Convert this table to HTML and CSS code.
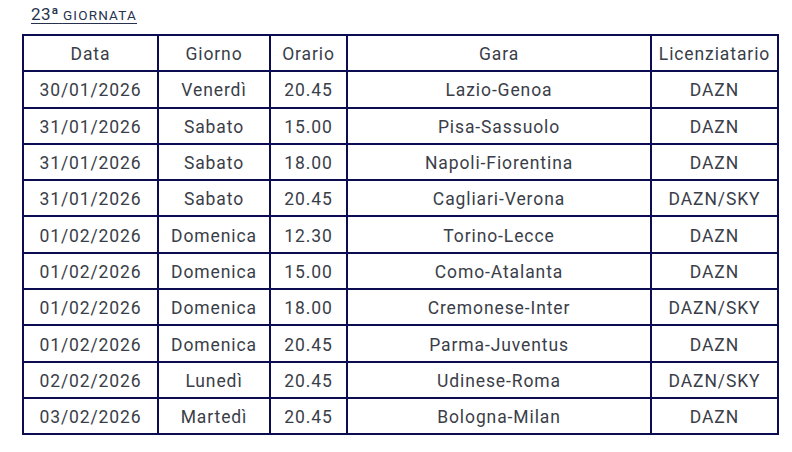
FILE: index.html
```html
<!DOCTYPE html>
<html lang="it">
<head>
<meta charset="utf-8">
<link rel="stylesheet" href="styles.css">
</head>
<body>
<div class="page">
  <a class="title"><span class="num">23ª</span>&nbsp;<span class="word">GIORNATA</span></a>
  <table class="cal">
    <colgroup>
      <col class="c1"><col class="c2"><col class="c3"><col class="c4"><col class="c5">
    </colgroup>
    <thead>
      <tr><th>Data</th><th>Giorno</th><th>Orario</th><th>Gara</th><th>Licenziatario</th></tr>
    </thead>
    <tbody>
      <tr><td>30/01/2026</td><td>Venerdì</td><td>20.45</td><td>Lazio-Genoa</td><td>DAZN</td></tr>
      <tr><td>31/01/2026</td><td>Sabato</td><td>15.00</td><td>Pisa-Sassuolo</td><td>DAZN</td></tr>
      <tr><td>31/01/2026</td><td>Sabato</td><td>18.00</td><td>Napoli-Fiorentina</td><td>DAZN</td></tr>
      <tr><td>31/01/2026</td><td>Sabato</td><td>20.45</td><td>Cagliari-Verona</td><td>DAZN/SKY</td></tr>
      <tr><td>01/02/2026</td><td>Domenica</td><td>12.30</td><td>Torino-Lecce</td><td>DAZN</td></tr>
      <tr><td>01/02/2026</td><td>Domenica</td><td>15.00</td><td>Como-Atalanta</td><td>DAZN</td></tr>
      <tr><td>01/02/2026</td><td>Domenica</td><td>18.00</td><td>Cremonese-Inter</td><td>DAZN/SKY</td></tr>
      <tr><td>01/02/2026</td><td>Domenica</td><td>20.45</td><td>Parma-Juventus</td><td>DAZN</td></tr>
      <tr><td>02/02/2026</td><td>Lunedì</td><td>20.45</td><td>Udinese-Roma</td><td>DAZN/SKY</td></tr>
      <tr><td>03/02/2026</td><td>Martedì</td><td>20.45</td><td>Bologna-Milan</td><td>DAZN</td></tr>
    </tbody>
  </table>
</div>
</body>
</html>
```

FILE: styles.css
```css
html, body {
  margin: 0;
  padding: 0;
  background: #ffffff;
}
.page {
  padding: 4px 0 0 22px;
  font-family: Roboto, "Liberation Sans", sans-serif;
  color: #333842;
}
.title {
  display: inline-block;
  margin-left: 9px;
  color: #27324f;
  text-decoration: underline;
  text-underline-offset: 3px;
  text-decoration-thickness: 1px;
  line-height: 20px;
  height: 30px;
}
.title .num {
  font-size: 17px;
  letter-spacing: 0.4px;
}
.title .word {
  font-size: 13.5px;
  letter-spacing: 1.2px;
}
.cal {
  border-collapse: collapse;
  table-layout: fixed;
  width: 755px;
  border: 2px solid #0c0c52;
}
.cal col.c1 { width: 135px; }
.cal col.c2 { width: 112px; }
.cal col.c3 { width: 77px; }
.cal col.c4 { width: 304px; }
.cal col.c5 { width: 127px; }
.cal th, .cal td {
  border: 2px solid #0c0c52;
  text-align: center;
  font-weight: 400;
  font-size: 17.5px;
  letter-spacing: 0.9px;
  height: 32.3px;
  padding: 2px 0 0;
  color: #3a3e48;
}
.cal tr {
  height: 36.3px;
}
```
